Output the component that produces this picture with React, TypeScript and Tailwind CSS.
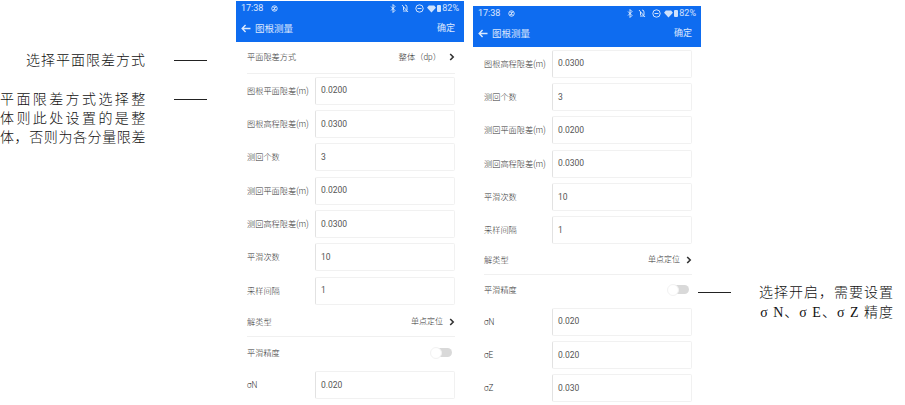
import React from "react";

const sans = "font-['Roboto','Noto_Sans_CJK_SC',sans-serif]";
const serif = "font-['Liberation_Serif','Noto_Sans_CJK_SC',serif]";

function StatusIcons() {
  return (
    <div className="flex items-center text-[9px] leading-none text-white/80">
      <svg width="6" height="9" viewBox="0 0 6 9" fill="none" stroke="currentColor" strokeWidth="1"><path d="M1 2.500l4 4-2 2V.5l2 2-4 4" /></svg>
      <svg className="ml-[5px]" width="8" height="9" viewBox="0 0 8 9" fill="none" stroke="currentColor" strokeWidth="1"><path d="M1 1l6 7M2 7h4M4 1a2 2 0 0 1 2 2v3M2.500 3v3" /></svg>
      <svg className="ml-[6px]" width="9" height="9" viewBox="0 0 9 9" fill="none" stroke="currentColor" strokeWidth="1"><circle cx="4.500" cy="4.500" r="3.700" /><path d="M2.500 4.500h4" /></svg>
      <svg className="ml-[3px]" width="9" height="8" viewBox="0 0 10 9" fill="currentColor"><path d="M0 3l2-2.500h6L10 3 5 8.500z" /></svg>
      <span className="ml-[1px] w-[4px] h-[7px] bg-white/80 rounded-[1px]" />
      <span className="ml-[1px]">82%</span>
    </div>
  );
}

function Header() {
  return (
    <div className="bg-[#0e6cf0] h-[41px] flex flex-col text-white/85 shrink-0">
      <div className="h-[15px] flex items-center justify-between pl-[5px] pr-[5px]">
        <div className="flex items-center gap-[8px] text-[9px] leading-none">
          <span>17:38</span>
          <svg width="7" height="7" viewBox="0 0 9 9" fill="none" stroke="currentColor" strokeWidth="1.200"><circle cx="4.500" cy="4.500" r="3.500" /><path d="M3 3h3L3 6h3" /></svg>
        </div>
        <StatusIcons />
      </div>
      <div className="flex-1 flex items-center justify-between pl-[5px] pr-[9px] pb-[1px]">
        <div className="flex items-center gap-[4px]">
          <svg width="10" height="9" viewBox="0 0 11 10" fill="none" stroke="currentColor" strokeWidth="1.600"><path d="M10.500 5H1.500M5 1.200L1.300 5 5 8.800" /></svg>
          <span className="text-[9.500px] leading-none">图根测量</span>
        </div>
        <span className="text-[9px] leading-none">确定</span>
      </div>
    </div>
  );
}

function InputRow({ label, value }: { label: string; value: string }) {
  return (
    <div className="h-[33.33px] pl-[11px] pr-[9px] flex items-center shrink-0">
      <span className="w-[68px] shrink-0 text-[8.200px] text-[#333] font-light leading-none whitespace-nowrap">{label}</span>
      <div className="flex-1 h-[28px] rounded-[2px] border border-[#f1f1f1] border-l-[#e2e2e2] flex items-center pl-[5px] text-[8.500px] text-[#555] leading-none">
        {value}
      </div>
    </div>
  );
}

function Chevron() {
  return (
    <svg width="6" height="8" viewBox="0 0 6 8" fill="none" stroke="#333" strokeWidth="1.600"><path d="M1.200 1l3 3-3 3" /></svg>
  );
}

function SelectRow({ label, value, h, vClass, gap }: { label: string; value: string; h: string; vClass: string; gap: string }) {
  return (
    <div className={`${h} ml-[11px] mr-[9px] flex items-center justify-between shrink-0 border-b border-[#f0f0f0]`}>
      <span className="text-[8.200px] text-[#333] font-light leading-none">{label}</span>
      <span className={`flex items-center ${gap} ${vClass} text-[#333] font-light leading-none`}>
        {value}
        <Chevron />
      </span>
    </div>
  );
}

function ToggleRow({ h }: { h: string }) {
  return (
    <div className={`${h} ml-[11px] mr-[12px] flex items-center justify-between shrink-0`}>
      <span className="text-[8.200px] text-[#333] font-light leading-none">平滑精度</span>
      <span className="relative w-[22px] h-[12px] flex items-center">
        <span className="absolute left-[3px] right-0 h-[9px] rounded-full bg-[#d9d9d9]" />
        <span className="absolute left-0 w-[12px] h-[12px] rounded-full bg-white border border-[#f2f2f2]" />
      </span>
    </div>
  );
}

function Line() {
  return <div className="w-[33px] h-[1px] bg-[#222]" />;
}

export default function App() {
  return (
    <div className={`w-[905px] h-[405px] overflow-hidden bg-white flex ${sans}`}>
      {/* left notes */}
      <div className={`w-[236px] shrink-0 flex flex-col pt-[52px] text-[14px] leading-[19px] text-[#111] font-light ${serif}`}>
        <div className="flex items-center h-[17px]">
          <div className="w-[146px] text-right tracking-[1px] whitespace-nowrap">选择平面限差方式</div>
          <div className="ml-[28px]"><Line /></div>
        </div>
        <div className="flex items-start mt-[21px]">
          <div className="w-[146px]">
            <div className="tracking-[2.400px] whitespace-nowrap">平面限差方式选择整</div>
            <div className="tracking-[2.400px] whitespace-nowrap">体则此处设置的是整</div>
            <div className="tracking-[0.600px] whitespace-nowrap">体，否则为各分量限差</div>
          </div>
          <div className="ml-[28px] mt-[9px]"><Line /></div>
        </div>
      </div>

      {/* phone 1 */}
      <div className="w-[228px] shrink-0 mt-[1px] flex flex-col">
        <Header />
        <SelectRow label="平面限差方式" value="整体（dp）" h="h-[32px]" vClass="text-[8.300px]" gap="gap-[8px]" />
        <InputRow label="图根平面限差(m)" value="0.0200" />
        <InputRow label="图根高程限差(m)" value="0.0300" />
        <InputRow label="测回个数" value="3" />
        <InputRow label="测回平面限差(m)" value="0.0200" />
        <InputRow label="测回高程限差(m)" value="0.0300" />
        <InputRow label="平滑次数" value="10" />
        <InputRow label="采样间隔" value="1" />
        <SelectRow label="解类型" value="单点定位" h="h-[30px]" vClass="text-[8px]" gap="gap-[6px]" />
        <ToggleRow h="h-[31px]" />
        <InputRow label="σN" value="0.020" />
      </div>

      {/* phone 2 */}
      <div className="w-[228px] shrink-0 ml-[9px] mt-[6px] flex flex-col">
        <Header />
        <InputRow label="图根高程限差(m)" value="0.0300" />
        <InputRow label="测回个数" value="3" />
        <InputRow label="测回平面限差(m)" value="0.0200" />
        <InputRow label="测回高程限差(m)" value="0.0300" />
        <InputRow label="平滑次数" value="10" />
        <InputRow label="采样间隔" value="1" />
        <SelectRow label="解类型" value="单点定位" h="h-[28px]" vClass="text-[8px]" gap="gap-[6px]" />
        <ToggleRow h="h-[30px]" />
        <InputRow label="σN" value="0.020" />
        <InputRow label="σE" value="0.020" />
        <InputRow label="σZ" value="0.030" />
      </div>

      {/* right notes */}
      <div className={`flex items-start mt-[283px] ml-[-3px] text-[14px] leading-[20px] text-[#111] font-light ${serif}`}>
        <div className="mt-[9px]"><Line /></div>
        <div className="ml-[27px] w-[136px] text-right whitespace-nowrap">
          <div className="tracking-[1px]">选择开启，需要设置</div>
          <div className="tracking-[1px]">σ N、σ E、σ Z 精度</div>
        </div>
      </div>
    </div>
  );
}
